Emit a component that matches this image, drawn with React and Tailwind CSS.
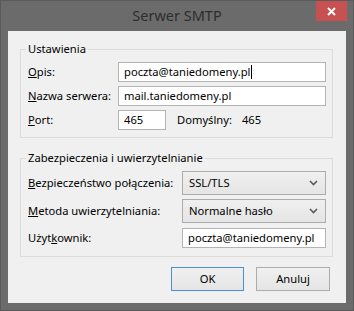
const font = { fontFamily: '"Noto Sans", "Open Sans", sans-serif' };

const Chevron = () => (
  <svg width="9" height="6" viewBox="0 0 9 6" className="shrink-0">
    <path d="M1 1 L4.5 4.5 L8 1" fill="none" stroke="#5a5a5a" strokeWidth="1.6" />
  </svg>
);

const Field = ({ children, className = "" }) => (
  <div
    className={`h-[20px] bg-white border border-[#b4b4b4] flex items-center px-[5px] text-black whitespace-nowrap overflow-hidden ${className}`}
  >
    {children}
  </div>
);

const Select = ({ value }) => (
  <div className="h-[24px] w-[144px] shrink-0 border border-[#acacac] bg-gradient-to-b from-[#f0f0f0] to-[#e5e5e5] flex items-center justify-between pl-[6px] pr-[7px]">
    <span>{value}</span>
    <Chevron />
  </div>
);

const Group = ({ title, children, className = "" }) => (
  <div className={`relative border border-[#dcdcdc] ${className}`}>
    <span className="absolute -top-[9px] left-[5px] bg-[#f0f0f0] px-[2px] leading-[16px]">
      {title}
    </span>
    {children}
  </div>
);

export default function App() {
  return (
    <div
      className="w-[354px] h-[311px] bg-[#6b6b6b] border border-[#5a5a5a] flex flex-col text-[11.2px] text-black whitespace-nowrap"
      style={font}
    >
      <div className="relative h-[30px] shrink-0 flex items-center justify-center">
        <span className="text-[14.5px] text-[#2e2e2e] -mt-[1px]">Serwer SMTP</span>
        <div className="absolute top-0 right-[6px] w-[31px] h-[20px] bg-[#c75050] flex items-center justify-center">
          <svg width="9" height="9" viewBox="0 0 9 9">
            <path d="M1 1 L8 8 M8 1 L1 8" stroke="#fff" strokeWidth="2" />
          </svg>
        </div>
      </div>

      <div className="mx-[7px] mb-[7px] flex-1 bg-[#f0f0f0] flex flex-col pl-[12px] pr-[13px] pt-[18px]">
        <Group title="Ustawienia" className="h-[89px] pt-[12px] pl-[7px] pr-[6px] flex flex-col gap-[4px]">
          <div className="flex items-center">
            <span className="w-[90px] shrink-0">
              <u>O</u>pis:
            </span>
            <Field className="flex-1 border-[#569de5]">
              poczta@taniedomeny.pl
              <span className="inline-block w-px h-[14px] bg-black ml-px" />
            </Field>
          </div>
          <div className="flex items-center">
            <span className="w-[90px] shrink-0">
              <u>N</u>azwa serwera:
            </span>
            <Field className="flex-1">mail.taniedomeny.pl</Field>
          </div>
          <div className="flex items-center">
            <span className="w-[90px] shrink-0">
              <u>P</u>ort:
            </span>
            <Field className="w-[48px]">465</Field>
            <span className="ml-[11px]">Domyślny:</span>
            <span className="ml-[10px]">465</span>
          </div>
        </Group>

        <Group
          title="Zabezpieczenia i uwierzytelnianie"
          className="mt-[20px] h-[99px] pt-[12px] pl-[7px] pr-[6px] flex flex-col"
        >
          <div className="flex items-center justify-between">
            <span>
              <u>B</u>ezpieczeństwo połączenia:
            </span>
            <Select value="SSL/TLS" />
          </div>
          <div className="flex items-center justify-between mt-[4px]">
            <span>
              <u>M</u>etoda uwierzytelniania:
            </span>
            <Select value="Normalne hasło" />
          </div>
          <div className="flex items-center justify-between mt-[5px]">
            <span>
              Użyt<u>k</u>ownik:
            </span>
            <Field className="w-[144px] px-[4px]">poczta@taniedomeny.pl</Field>
          </div>
        </Group>

        <div className="flex justify-end gap-[12px] mt-[10px] pr-[3px]">
          <button className="w-[73px] h-[24px] border border-[#4a90d9] bg-gradient-to-b from-[#f0f0f0] to-[#e5e5e5] text-black">
            OK
          </button>
          <button className="w-[74px] h-[24px] border border-[#acacac] bg-gradient-to-b from-[#f0f0f0] to-[#e5e5e5] text-black">
            Anuluj
          </button>
        </div>
      </div>
    </div>
  );
}
